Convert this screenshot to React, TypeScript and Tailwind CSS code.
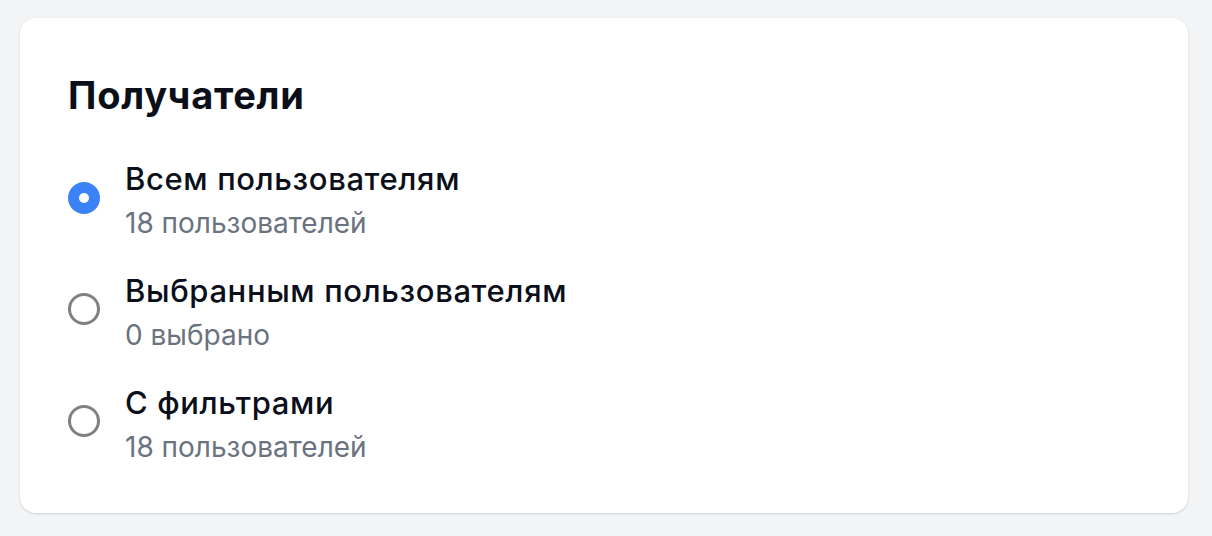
import { useState } from "react";

const options = [
  { id: "all", title: "Всем пользователям", sub: "18 пользователей" },
  { id: "selected", title: "Выбранным пользователям", sub: "0 выбрано" },
  { id: "filters", title: "С фильтрами", sub: "18 пользователей" },
];

export default function App() {
  const [value, setValue] = useState("all");

  return (
    <div className="min-h-screen bg-[#f3f4f6] pl-[20px] pr-[24px] pt-[18px] pb-[22px] font-['Inter',sans-serif]">
      <div className="rounded-2xl bg-white px-[48px] pt-[57px] pb-[48px] shadow-[0_1px_3px_rgba(0,0,0,0.1),0_1px_2px_rgba(0,0,0,0.06)]">
        <h2 className="text-[38px] leading-[40px] font-bold tracking-[0.02em] text-[#0b0f1a]">Получатели</h2>
        <div className="mt-[46px] flex flex-col gap-[32px]">
          {options.map((o) => {
            const checked = value === o.id;
            return (
              <label key={o.id} className="flex cursor-pointer items-start gap-[25px]">
                {/* radio */}
                <input
                  type="radio"
                  name="recipients"
                  className="sr-only"
                  checked={checked}
                  onChange={() => setValue(o.id)}
                />
                {checked ? (
                  <span className="mt-[21px] flex h-[32px] w-[32px] shrink-0 items-center justify-center rounded-full bg-[#3b82f6]">
                    <span className="h-[10px] w-[10px] rounded-full bg-white" />
                  </span>
                ) : (
                  <span className="mt-[20px] h-[32px] w-[32px] shrink-0 rounded-full border-[3px] border-[#808080]" />
                )}
                <span className="flex flex-col gap-[8px]">
                  <span className="text-[31px] leading-[36px] font-medium tracking-[0.02em] text-[#0b0f1a]">{o.title}</span>
                  <span className="text-[28px] leading-[36px] text-[#6b7280]">{o.sub}</span>
                </span>
              </label>
            );
          })}
        </div>
      </div>
    </div>
  );
}
